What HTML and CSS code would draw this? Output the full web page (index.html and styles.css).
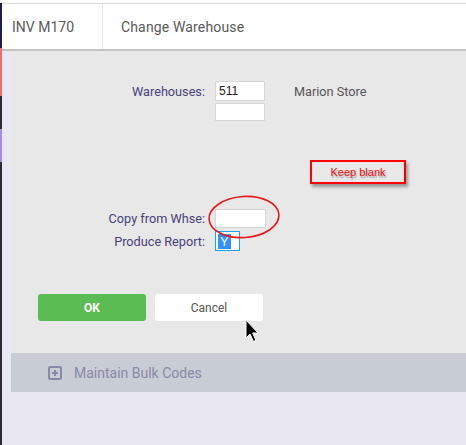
FILE: index.html
```html
<!DOCTYPE html>
<html>
<head>
<meta charset="utf-8">
<link rel="stylesheet" href="styles.css">
</head>
<body>
<div class="app">
  <div class="rail">
    <span class="seg navy"></span>
    <span class="seg coral"></span>
    <span class="seg dark"></span>
    <span class="seg purple"></span>
    <span class="seg rest"></span>
  </div>
  <div class="main">
    <header class="topbar">
      <div class="code">INV M170</div>
      <div class="title">Change Warehouse</div>
    </header>
    <section class="panel">
      <div class="form">
        <div class="row r-wh">
          <label class="lbl">Warehouses:</label>
          <div class="field w50 h20">511</div>
          <span class="desc">Marion Store</span>
        </div>
        <div class="row r-wh2">
          <span class="lbl"></span>
          <div class="field w50 h18"></div>
        </div>
        <div class="row r-copy">
          <label class="lbl">Copy from Whse:</label>
          <div class="field w51 h19"></div>
        </div>
        <div class="row r-rep">
          <label class="lbl">Produce Report:</label>
          <div class="field focus w25 h20"><span class="sel">Y</span></div>
        </div>
      </div>
      <div class="actions">
        <button class="btn ok">OK</button>
        <button class="btn cancel">Cancel</button>
      </div>
      <div class="note">Keep blank</div>
      <svg class="ring" width="76" height="48" viewBox="0 0 76 48">
        <ellipse cx="38" cy="24" rx="35" ry="20.5" transform="rotate(-4 38 24)" fill="none" stroke="#e81818" stroke-width="1.6"/>
      </svg>
      <svg class="cursor" width="14" height="24" viewBox="0 0 14 24">
        <path d="M1 1 L1 19 L5 15 L8.5 22.5 L11 21.3 L7.6 14 L13 14 Z" fill="#000" stroke="#fff" stroke-width="1"/>
      </svg>
    </section>
    <div class="bulk">
      <span class="plus"></span>
      <span class="bulk-text">Maintain Bulk Codes</span>
    </div>
  </div>
</div>
</body>
</html>
```
FILE: styles.css
```css
* { box-sizing: border-box; }
html, body { margin: 0; padding: 0; }
body {
  background: #ffffff;
  font-family: Roboto, "Liberation Sans", Arial, sans-serif;
  width: 466px;
  height: 445px;
  overflow: hidden;
}
.app {
  display: flex;
  padding-top: 3px;
  height: 445px;
}
.rail {
  width: 2px;
  display: flex;
  flex-direction: column;
  flex: none;
}
.seg { display: block; }
.navy { height: 45px; background: #211c4e; }
.coral { height: 48px; background: #ef6e6b; }
.dark { height: 33px; background: #2c2a36; }
.purple { height: 33px; background: #a88de6; }
.rest { flex: 1; background: #2c2a36; }

.main {
  flex: 1;
  background: #e9e8f2;
  display: flex;
  flex-direction: column;
}
.topbar {
  height: 48px;
  background: #fff;
  border-top: 1px solid #dcdcdc;
  border-bottom: 2px solid #c4c4c6;
  display: flex;
  align-items: stretch;
  color: #5a5a5a;
  font-size: 14px;
}
.code {
  width: 101px;
  padding-left: 10px;
  border-right: 1px solid #e6e6e6;
  display: flex;
  align-items: center;
}
.title {
  padding-left: 18px;
  display: flex;
  align-items: center;
  font-size: 14px;
  letter-spacing: 0.15px;
}
.panel {
  position: relative;
  margin-left: 9px;
  height: 302px;
  background: #e8e8e8;
  padding-top: 30px;
}
.form { display: flex; flex-direction: column; }
.row {
  display: flex;
  align-items: center;
  gap: 10px;
}
.lbl {
  width: 194px;
  text-align: right;
  font-size: 12.7px;
  color: #47427a;
}
.r-wh2 { margin-top: 2px; }
.r-copy { margin-top: 88px; }
.r-rep { margin-top: 3px; }
.field {
  background: #fff;
  border: 1px solid #d6d6d6;
  font-family: "Liberation Sans", Arial, sans-serif;
  font-size: 12px;
  color: #222;
  padding-left: 3px;
  display: flex;
  align-items: center;
}
.w50 { width: 50px; }
.w51 { width: 51px; }
.w25 { width: 25px; }
.h18 { height: 18px; }
.h19 { height: 19px; }
.h20 { height: 20px; }
.field.focus {
  border: 1px solid #1aa6ee;
  padding-left: 2px;
}
.sel {
  background: #3390ff;
  color: #fff;
  font-size: 13px;
  padding: 0 2px;
  line-height: 15px;
}
.desc {
  margin-left: 19px;
  font-size: 12.7px;
  color: #555;
}
.actions {
  display: flex;
  gap: 9px;
  margin-top: 43px;
  margin-left: 27px;
}
.btn {
  width: 108px;
  height: 27px;
  border: none;
  border-radius: 3px;
  font-family: Roboto, "Liberation Sans", Arial, sans-serif;
  font-size: 12px;
  padding: 0;
}
.ok { background: #5abc52; color: #fff; font-weight: bold; }
.cancel { background: #fff; color: #555; }

.note {
  position: absolute;
  left: 299px;
  top: 109px;
  width: 96px;
  height: 24px;
  border: 2px solid #ff0000;
  box-shadow: 2px 3px 3px rgba(0,0,0,0.35);
  color: #f01010;
  font-family: "Liberation Sans", Arial, sans-serif;
  font-size: 11px;
  display: flex;
  align-items: center;
  justify-content: center;
  text-shadow: 1px 2px 1px rgba(0,0,0,0.3);
}
.ring {
  position: absolute;
  left: 195px;
  top: 142px;
}
.cursor {
  position: absolute;
  left: 234px;
  top: 268px;
}
.bulk {
  margin-left: 9px;
  height: 39px;
  background: #c8ccd4;
  display: flex;
  align-items: center;
  padding-left: 37px;
  color: #8a89a8;
  font-size: 14px;
}
.plus {
  width: 14px;
  height: 14px;
  border: 2px solid #8a89a8;
  border-radius: 2px;
  position: relative;
  margin-right: 12px;
}
.plus::before, .plus::after {
  content: "";
  position: absolute;
  background: #8a89a8;
}
.plus::before { left: 2px; top: 4px; width: 6px; height: 2px; }
.plus::after { left: 4px; top: 2px; width: 2px; height: 6px; }
```
